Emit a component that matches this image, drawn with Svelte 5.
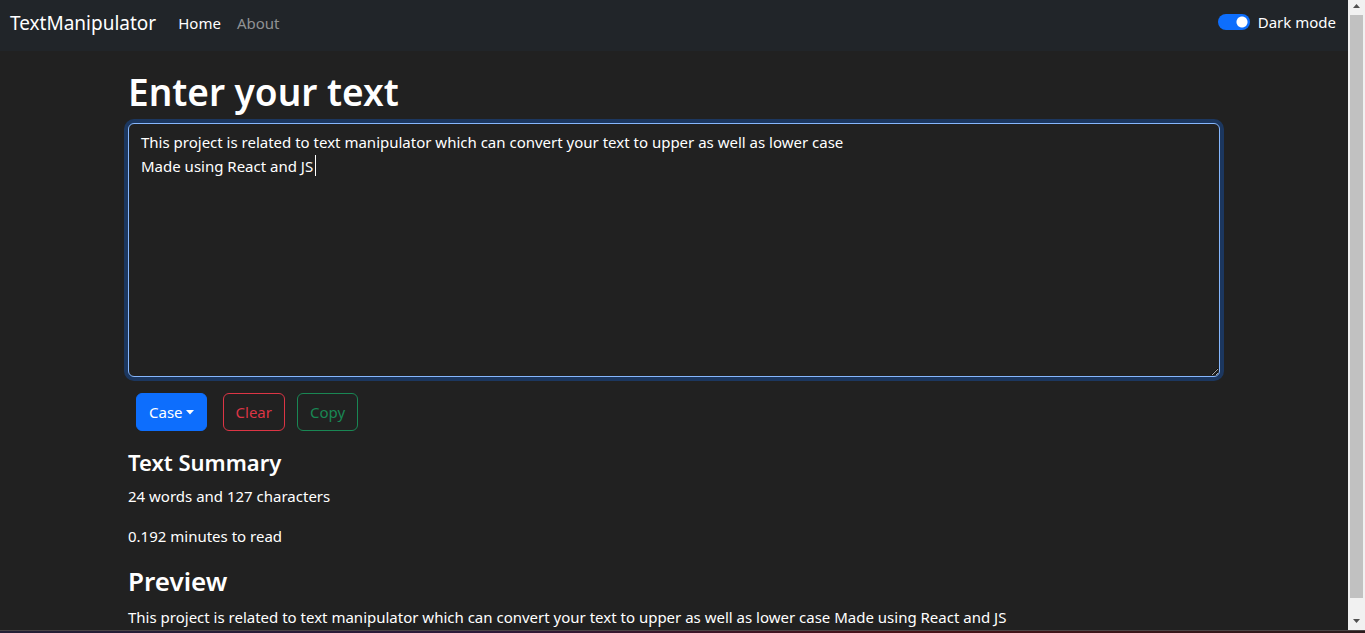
<script>
  let text = $state(
    'This project is related to text manipulator which can convert your text to upper as well as lower case\nMade using React and JS'
  );
  let dark = $state(true);
  const words = 24;
  const characters = 127;
  const minutes = 0.192;
</script>

<div class="window">
  <div class="view">
    <div class="page">
      <nav class="navbar">
        <a class="brand" href="#top">TextManipulator</a>
        <a class="link active" href="#home">Home</a>
        <a class="link" href="#about">About</a>
        <div class="mode">
          <input id="dark-mode" type="checkbox" role="switch" bind:checked={dark} />
          <label for="dark-mode">Dark mode</label>
        </div>
      </nav>

      <main class="container">
        <h1><label for="source">Enter your text</label></h1>
        <div class="editor">
          <textarea id="source" rows="10" spellcheck="false" bind:value={text}></textarea>
          <span class="caret" aria-hidden="true"></span>
        </div>
        <div class="actions">
          <button class="btn primary" type="button">
            Case
            <svg width="8" height="5" viewBox="0 0 8 5" aria-hidden="true"><path d="M0 0h8L4 4.6z" fill="currentColor" /></svg>
          </button>
          <button class="btn danger" type="button">Clear</button>
          <button class="btn success" type="button">Copy</button>
        </div>
        <h2>Text Summary</h2>
        <p>{words} words and {characters} characters</p>
        <p>{minutes} minutes to read</p>
        <h3>Preview</h3>
        <p>{text}</p>
      </main>
    </div>

    <div class="scrollbar" aria-hidden="true">
      <svg width="17" height="15" viewBox="0 0 17 15"><path d="M5 8h7L8.5 4z" fill="#505050" /></svg>
      <div class="thumb"></div>
      <svg width="17" height="32" viewBox="0 0 17 32"><path d="M5 21h7L8.5 25z" fill="#505050" /></svg>
    </div>
  </div>
  <div class="edge"></div>
</div>

<style>
  :global(body) {
    margin: 0;
    background: #212121;
  }
  * {
    box-sizing: border-box;
  }
  .window {
    display: flex;
    flex-direction: column;
    height: 100vh;
    color: #fff;
    font: 15px/24px 'Noto Sans', 'Open Sans', sans-serif;
  }
  .view {
    display: flex;
    flex: 1;
    min-height: 0;
  }
  .page {
    flex: 1;
    min-width: 0;
    overflow: hidden;
    background: #212121;
  }
  .navbar {
    display: flex;
    align-items: center;
    gap: 16px;
    height: 51px;
    padding: 0 12px 6px 10px;
    background: #212529;
  }
  a {
    color: inherit;
    text-decoration: none;
  }
  .brand {
    margin-right: 6px;
    font-size: 19px;
  }
  .link {
    color: #909294;
  }
  .link.active {
    color: #fff;
  }
  .mode {
    display: flex;
    align-items: center;
    gap: 8px;
    margin-left: auto;
    padding-bottom: 2px;
  }
  .mode input {
    appearance: none;
    width: 32px;
    height: 16px;
    margin: 0;
    border-radius: 8px;
    background: radial-gradient(circle at 24px 8px, #fff 5px, transparent 6px) #0d6efd;
  }
  .mode input:not(:checked) {
    background: radial-gradient(circle at 8px 8px, #fff 5px, transparent 6px) #6c757d;
  }
  .container {
    max-width: 1140px;
    margin: 0 auto;
    padding: 16px 24px 0;
  }
  h1,
  h2,
  h3 {
    margin: 0 0 6px;
    font-weight: 600;
  }
  h1 {
    font-size: 37px;
    line-height: 50px;
  }
  h2 {
    font-size: 22px;
    line-height: 31px;
  }
  h3 {
    font-size: 26px;
    line-height: 35px;
  }
  p {
    margin: 0 0 16px;
  }
  .editor {
    position: relative;
    display: flex;
  }
  textarea {
    width: 100%;
    padding: 6px 12px;
    border: 1px solid #86b7fe;
    border-radius: 6px;
    outline: 0;
    background: #212121;
    box-shadow: 0 0 0 4px #1c375f;
    color: inherit;
    font: inherit;
  }
  .caret {
    position: absolute;
    top: 32px;
    left: 187px;
    width: 1px;
    height: 21px;
    background: #fff;
    pointer-events: none;
  }
  .actions {
    display: flex;
    gap: 12px;
    padding: 16px 8px;
  }
  .btn {
    height: 38px;
    padding: 0 12px;
    border: 1px solid currentColor;
    border-radius: 6px;
    background: transparent;
    font: inherit;
  }
  .primary {
    display: flex;
    align-items: center;
    gap: 3px;
    margin-right: 4px;
    border-color: #0d6efd;
    background: #0d6efd;
    color: #fff;
  }
  .danger {
    color: #dc3545;
  }
  .success {
    color: #198754;
  }
  .scrollbar {
    display: flex;
    flex-direction: column;
    width: 17px;
    background: #f1f1f1;
  }
  .thumb {
    flex: 1;
    margin: 0 2px;
    background: #c1c1c1;
  }
  .edge {
    height: 3px;
    border-top: 1px solid #4b4545;
    background: linear-gradient(90deg, #241f35, #2e1a3a 35%, #4a1218 66%, #2b1a1c);
  }
</style>
